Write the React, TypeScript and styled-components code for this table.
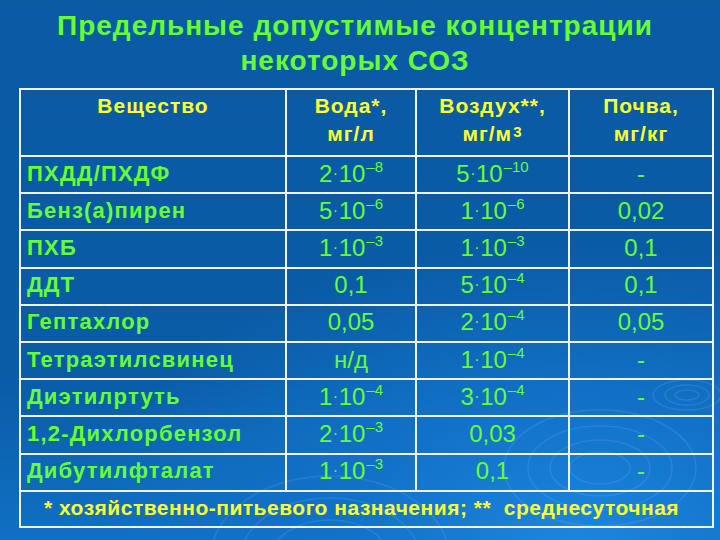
import styled, { createGlobalStyle } from 'styled-components';

const GlobalStyle = createGlobalStyle`
  html, body { margin: 0; padding: 0; }
  body {
    font-family: 'Liberation Sans', Arial, sans-serif;
    background: #0a5ba5;
  }
`;

type Value = { base: string; exp?: string } | string;

interface Row {
  name: string;
  water: Value;
  air: Value;
  soil: Value;
}

const rows: Row[] = [
  { name: 'ПХДД/ПХДФ', water: { base: '2', exp: '–8' }, air: { base: '5', exp: '–10' }, soil: '-' },
  { name: 'Бенз(а)пирен', water: { base: '5', exp: '–6' }, air: { base: '1', exp: '–6' }, soil: '0,02' },
  { name: 'ПХБ', water: { base: '1', exp: '–3' }, air: { base: '1', exp: '–3' }, soil: '0,1' },
  { name: 'ДДТ', water: '0,1', air: { base: '5', exp: '–4' }, soil: '0,1' },
  { name: 'Гептахлор', water: '0,05', air: { base: '2', exp: '–4' }, soil: '0,05' },
  { name: 'Тетраэтилсвинец', water: 'н/д', air: { base: '1', exp: '–4' }, soil: '-' },
  { name: 'Диэтилртуть', water: { base: '1', exp: '–4' }, air: { base: '3', exp: '–4' }, soil: '-' },
  { name: '1,2-Дихлорбензол', water: { base: '2', exp: '–3' }, air: '0,03', soil: '-' },
  { name: 'Дибутилфталат', water: { base: '1', exp: '–3' }, air: '0,1', soil: '-' },
];

const Slide = styled.div`
  position: relative;
  width: 720px;
  height: 540px;
  overflow: hidden;
  box-sizing: border-box;
  padding-top: 8px;
  background:
    radial-gradient(ellipse 70% 55% at 80% 100%, #1b86de 0%, #1272c8 45%, rgba(12, 96, 172, 0) 100%),
    linear-gradient(180deg, #0a5aa4 0%, #0a5ca7 70%, #1070c4 100%);
`;

const Ripples = styled.svg`
  position: absolute;
  left: 0;
  top: 0;
  pointer-events: none;
`;

const Content = styled.div`
  position: relative;
`;

const Title = styled.h1`
  margin: 0;
  padding-right: 10px;
  text-align: center;
  color: #66ff33;
  font-size: 28px;
  font-weight: bold;
  line-height: 35px;
  letter-spacing: 1px;
`;

const Table = styled.table`
  margin: 10px 0 0 19px;
  width: 695px;
  table-layout: fixed;
  border-collapse: collapse;
  border: 2px solid #eef4ff;
`;

const HeadCell = styled.th`
  height: 63px;
  padding: 2px 2px 0;
  vertical-align: top;
  text-align: center;
  color: #ffff33;
  font-size: 21px;
  font-weight: bold;
  line-height: 28px;
  letter-spacing: 1px;
  border: 2px solid #eef4ff;
`;

const Cell = styled.td<{ $name?: boolean }>`
  height: 33.2px;
  padding: 0 0 2px ${p => (p.$name ? '6px' : '0')};
  text-align: ${p => (p.$name ? 'left' : 'center')};
  vertical-align: middle;
  color: #66ff33;
  font-size: ${p => (p.$name ? '22px' : '24px')};
  font-weight: ${p => (p.$name ? 'bold' : 'normal')};
  letter-spacing: ${p => (p.$name ? '1.2px' : '0')};
  white-space: nowrap;
  border: 2px solid #eef4ff;
`;

const Foot = styled.td`
  height: 32px;
  padding: 0 10px 2px 0;
  text-align: center;
  color: #ffff33;
  font-size: 21px;
  font-weight: bold;
  letter-spacing: 0.5px;
  white-space: pre;
  border: 2px solid #eef4ff;
`;

const Dot = styled.span`
  font-size: 16px;
  position: relative;
  top: -3px;
  margin: 0 0.5px;
`;

const Sup = styled.sup`
  font-size: 15px;
  vertical-align: top;
  position: relative;
  top: -2px;
  margin-left: 1px;
`;

function Num({ v }: { v: Value }) {
  if (typeof v === 'string') return <>{v}</>;
  return (
    <>
      {v.base}
      <Dot>·</Dot>10<Sup>{v.exp}</Sup>
    </>
  );
}

export default function App() {
  return (
    <>
      <GlobalStyle />
      <Slide>
        <Ripples width={720} height={540} viewBox="0 0 720 540">
          <g fill="none" stroke="#7fc0ff" strokeOpacity={0.18} strokeWidth={1.5}>
            <ellipse cx={687} cy={395} rx={12} ry={5} />
            <ellipse cx={687} cy={395} rx={22} ry={10} />
            <ellipse cx={687} cy={395} rx={34} ry={15} />
            <ellipse cx={600} cy={468} rx={30} ry={16} />
            <ellipse cx={600} cy={468} rx={50} ry={28} />
            <ellipse cx={600} cy={468} rx={72} ry={42} />
            <ellipse cx={600} cy={468} rx={96} ry={58} />
            <ellipse cx={330} cy={560} rx={60} ry={40} />
            <ellipse cx={330} cy={560} rx={90} ry={62} />
            <ellipse cx={330} cy={560} rx={120} ry={84} />
          </g>
        </Ripples>
        <Content>
          <Title>
            Предельные допустимые концентрации
            <br />
            некоторых СОЗ
          </Title>
          <Table>
            <colgroup>
              <col style={{ width: 266 }} />
              <col style={{ width: 130 }} />
              <col style={{ width: 153 }} />
              <col style={{ width: 144 }} />
            </colgroup>
            <thead>
              <tr>
                <HeadCell>Вещество</HeadCell>
                <HeadCell>
                  Вода*,
                  <br />
                  мг/л
                </HeadCell>
                <HeadCell>
                  Воздух**,
                  <br />
                  мг/м<Sup>3</Sup>
                </HeadCell>
                <HeadCell>
                  Почва,
                  <br />
                  мг/кг
                </HeadCell>
              </tr>
            </thead>
            <tbody>
              {rows.map(r => (
                <tr key={r.name}>
                  <Cell $name>{r.name}</Cell>
                  <Cell><Num v={r.water} /></Cell>
                  <Cell><Num v={r.air} /></Cell>
                  <Cell><Num v={r.soil} /></Cell>
                </tr>
              ))}
              <tr>
                <Foot colSpan={4}>* хозяйственно-питьевого назначения; **  среднесуточная</Foot>
              </tr>
            </tbody>
          </Table>
        </Content>
      </Slide>
    </>
  );
}
